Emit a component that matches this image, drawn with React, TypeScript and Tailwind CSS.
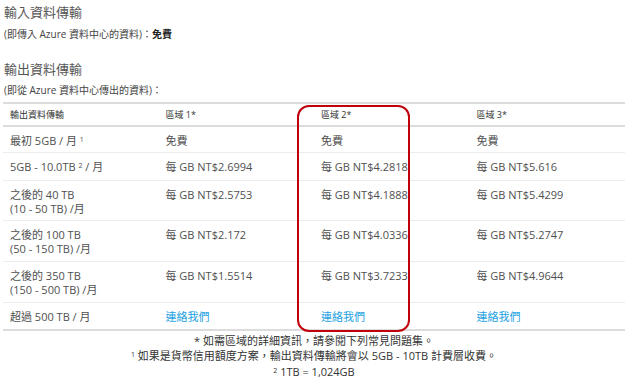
import React from "react";

type Row = { label: React.ReactNode; r1: string; r2: string; r3: string; h: string; link?: boolean };

const rows: Row[] = [
  { label: <>最初 5GB / 月 <sup className="text-[7px]">1</sup></>, r1: "免費", r2: "免費", r3: "免費", h: "h-[25px]" },
  {
    label: <>5GB - 10.0TB <sup className="text-[7px]">2</sup> / 月</>,
    r1: "每 GB NT$2.6994",
    r2: "每 GB NT$4.2818",
    r3: "每 GB NT$5.616",
    h: "h-[27px]",
  },
  {
    label: <>之後的 40 TB<br />(10 - 50 TB) /月</>,
    r1: "每 GB NT$2.5753",
    r2: "每 GB NT$4.1888",
    r3: "每 GB NT$5.4299",
    h: "h-[39px]",
  },
  {
    label: <>之後的 100 TB<br />(50 - 150 TB) /月</>,
    r1: "每 GB NT$2.172",
    r2: "每 GB NT$4.0336",
    r3: "每 GB NT$5.2747",
    h: "h-[40px]",
  },
  {
    label: <>之後的 350 TB<br />(150 - 500 TB) /月</>,
    r1: "每 GB NT$1.5514",
    r2: "每 GB NT$3.7233",
    r3: "每 GB NT$4.9644",
    h: "h-[40px]",
  },
  { label: "超過 500 TB / 月", r1: "連絡我們", r2: "連絡我們", r3: "連絡我們", h: "h-[26px]", link: true },
];

const font = { fontFamily: '"Open Sans", "Noto Sans CJK TC", sans-serif' };

const App: React.FC = () => {
  return (
    <div className="w-[640px] h-[382px] bg-white text-[#505050] overflow-hidden" style={font}>
      {/* Inbound */}
      <div className="pl-[4px] pt-[3px]">
        <h2 className="text-[13px] leading-[18px] text-[#555]">輸入資料傳輸</h2>
        <p className="mt-[6px] text-[10px] leading-[14px] text-[#444]">
          (即傳入 Azure 資料中心的資料)：<span className="font-bold text-[#222]">免費</span>
        </p>
      </div>

      {/* Outbound */}
      <div className="pl-[4px] mt-[19px]">
        <h2 className="text-[13px] leading-[18px] text-[#555]">輸出資料傳輸</h2>
        <p className="mt-[5px] text-[10px] leading-[14px] text-[#444]">(即從 Azure 資料中心傳出的資料)：</p>
      </div>

      {/* Table */}
      <div className="relative ml-[3px] mt-[5px] w-[622px]">
        <div className="border-t-2 border-b-2 border-[#dcdcdc]">
          <div className="grid grid-cols-4 h-[23px] items-center text-[9px] text-[#333] border-b-2 border-[#dcdcdc]">
            <div className="pl-[7px]">輸出資料傳輸</div>
            <div className="pl-[7px]">區域 1*</div>
            <div className="pl-[7px]">區域 2*</div>
            <div className="pl-[7px]">區域 3*</div>
          </div>
          {rows.map((r, i) => (
            <div
              key={i}
              className={`grid grid-cols-4 box-content text-[11px] leading-[14px] ${r.h} ${i < rows.length - 1 ? "border-b border-[#ececec]" : ""}`}
            >
              <div className="pl-[7px] pt-[7px]">{r.label}</div>
              {[r.r1, r.r2, r.r3].map((v, j) => (
                <div key={j} className={`pl-[7px] pt-[7px] ${r.link ? "text-[#1ba1e2]" : ""}`}>
                  {v}
                </div>
              ))}
            </div>
          ))}
        </div>

        {/* highlight around region 2 */}
        <div className="absolute left-[294px] top-[3px] w-[113px] h-[227px] border-2 border-[#c0000a] rounded-[12px] pointer-events-none" />
      </div>

      {/* Footnotes */}
      <div className="mt-[2px] w-[628px] text-center text-[11px] leading-[15px] text-[#333]">
        <p>* 如需區域的詳細資訊，請參閱下列常見問題集。</p>
        <p>
          <sup className="text-[7px]">1</sup> 如果是貨幣信用額度方案，輸出資料傳輸將會以 5GB - 10TB 計費層收費。
        </p>
        <p className="mt-[1px]">
          <sup className="text-[7px]">2</sup> 1TB = 1,024GB
        </p>
      </div>
    </div>
  );
};

export default App;
